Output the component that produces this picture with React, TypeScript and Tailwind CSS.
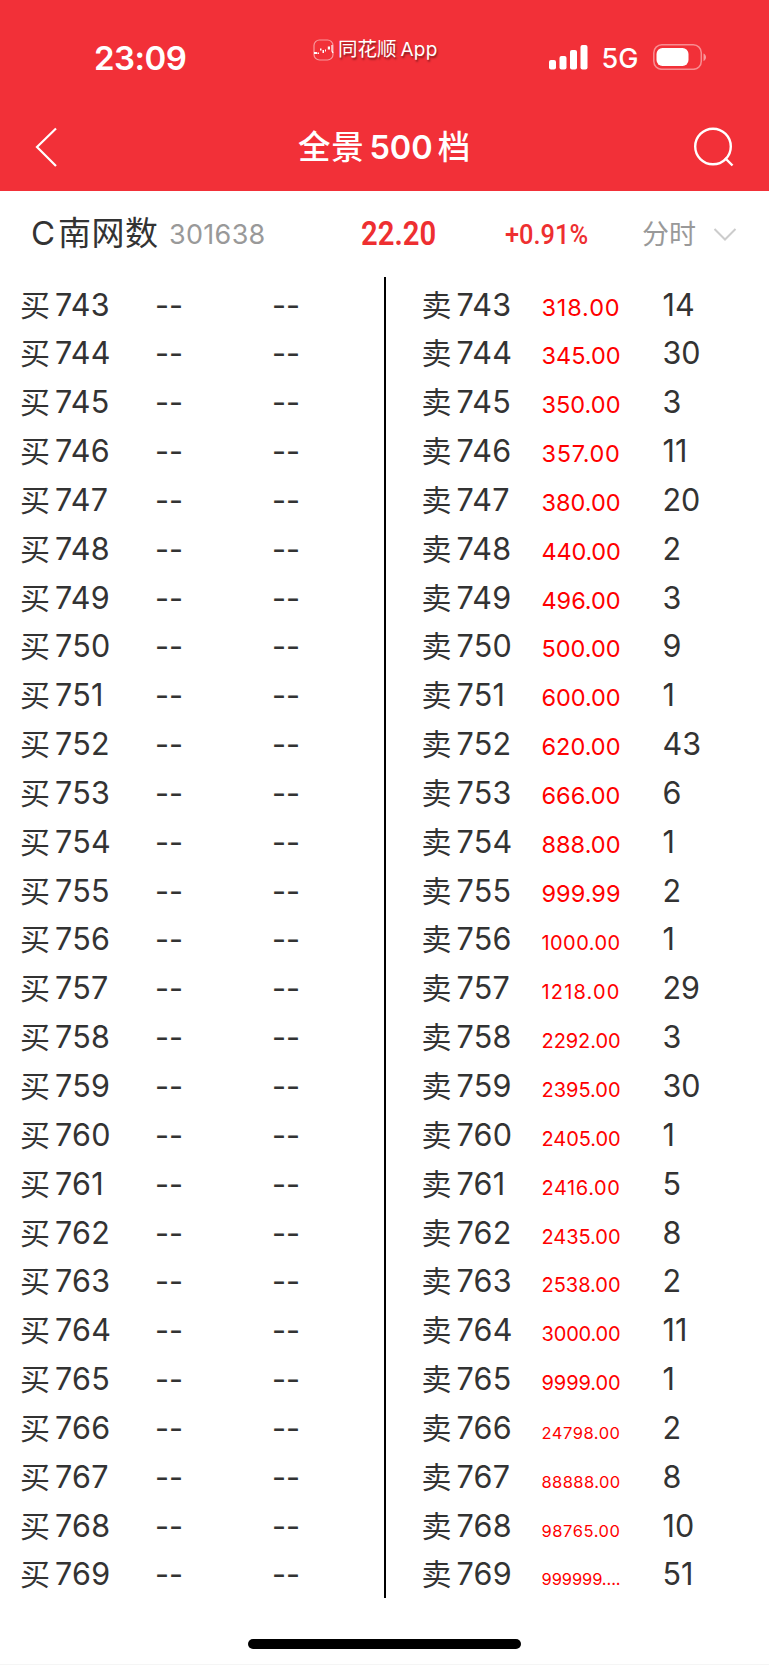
import { useLayoutEffect, useRef, useState } from 'react';

interface Level {
    level: number;
    price: string;
    volume: number;
}

const asks: Level[] = [
    { level: 743, price: '318.00', volume: 14 },
    { level: 744, price: '345.00', volume: 30 },
    { level: 745, price: '350.00', volume: 3 },
    { level: 746, price: '357.00', volume: 11 },
    { level: 747, price: '380.00', volume: 20 },
    { level: 748, price: '440.00', volume: 2 },
    { level: 749, price: '496.00', volume: 3 },
    { level: 750, price: '500.00', volume: 9 },
    { level: 751, price: '600.00', volume: 1 },
    { level: 752, price: '620.00', volume: 43 },
    { level: 753, price: '666.00', volume: 6 },
    { level: 754, price: '888.00', volume: 1 },
    { level: 755, price: '999.99', volume: 2 },
    { level: 756, price: '1000.00', volume: 1 },
    { level: 757, price: '1218.00', volume: 29 },
    { level: 758, price: '2292.00', volume: 3 },
    { level: 759, price: '2395.00', volume: 30 },
    { level: 760, price: '2405.00', volume: 1 },
    { level: 761, price: '2416.00', volume: 5 },
    { level: 762, price: '2435.00', volume: 8 },
    { level: 763, price: '2538.00', volume: 2 },
    { level: 764, price: '3000.00', volume: 11 },
    { level: 765, price: '9999.00', volume: 1 },
    { level: 766, price: '24798.00', volume: 2 },
    { level: 767, price: '88888.00', volume: 8 },
    { level: 768, price: '98765.00', volume: 10 },
    { level: 769, price: '999999....', volume: 51 },
];

const PRICE_WIDTH = 79;

function priceSize(price: string) {
    if (price.length <= 6) return 'text-[23.500px]';
    if (price.length === 7) return 'text-[20px]';
    return 'text-[16.500px]';
}

// Prices get smaller with length, tracking is tuned so they all fill the column
function Price({ value }: { value: string }) {
    const ref = useRef<HTMLSpanElement>(null);
    const [spacing, setSpacing] = useState(0);

    useLayoutEffect(() => {
        if (ref.current) {
            const { width } = ref.current.getBoundingClientRect();
            setSpacing((PRICE_WIDTH - width) / value.length);
        }
    }, [value]);

    return (
        <div className="w-[121px] text-[#ff0000]">
            <span ref={ref} className={priceSize(value)} style={{ letterSpacing: spacing }}>
                {value}
            </span>
        </div>
    );
}

function Label({ side, level }: { side: string; level: number }) {
    return (
        <div className="flex items-baseline">
            <span className="w-[35px] text-[30px]">{side}</span>
            <span className="tracking-[0.300px]">{level}</span>
        </div>
    );
}

function StatusBar() {
    return (
        <div className="flex h-[104px] items-start text-white">
            <div className="ml-[94px] mt-[38px] w-[219px] text-[33px] font-semibold leading-[40px] tracking-[-0.500px]">23:09</div>
            <div className="mt-[37px] flex items-center">
                <svg width="21" height="22" viewBox="0 0 21 22" fill="none">
                    <rect x="1" y="1" width="19" height="20" rx="5.5" stroke="white" strokeOpacity="0.5" strokeWidth="1.2" />
                    <path d="M1 13h3v2H1zM4.500 13.500h1.500v1.500H4.500zM7 9.500h1.500v2H7zM9.500 11h1.500v3H9.500zM12 10.500h1v2h-1zM14.800 7.500h2.200v3h-2.200z" fill="white" />
                    <path d="M19 6v6l1 2" stroke="white" strokeWidth="1.2" />
                </svg>
                <div className="ml-[4px] whitespace-nowrap text-[19.500px] leading-[24px] [text-shadow:1px_2px_2px_rgba(0,0,0,0.45)]">
                    同花顺<span className="ml-[4px] text-[19px] tracking-[0.200px]">App</span>
                </div>
            </div>
            <svg className="ml-auto mt-[45px]" width="39" height="25" fill="white">
                <rect x="0" y="15" width="7" height="9.500" rx="2" />
                <rect x="10.500" y="11" width="7" height="13.500" rx="2" />
                <rect x="21" y="5" width="7" height="19.500" rx="2" />
                <rect x="31.500" y="0" width="7" height="24.500" rx="2" />
            </svg>
            <div className="ml-[14px] mt-[42px] w-[51.500px] text-[27px] font-medium leading-[34px]">5G</div>
            <svg className="mr-[62px] mt-[44px]" width="54" height="26" fill="none">
                <rect x="0.800" y="0.800" width="47.500" height="24.500" rx="8" stroke="white" strokeOpacity="0.45" strokeWidth="1.500" />
                <rect x="3.500" y="4" width="32" height="18" rx="6" fill="white" />
                <path d="M50.500 9.500c1.500.500 2.500 2 2.500 3.700s-1 3.200-2.500 3.700z" fill="white" fillOpacity="0.5" />
            </svg>
        </div>
    );
}

function NavBar() {
    return (
        <div className="flex h-[87px] items-start px-[34px] text-white">
            <svg className="mt-[23px]" width="60" height="40" fill="none" stroke="white" strokeWidth="2.200">
                <path d="M22 1.500L3 20L22 39" />
            </svg>
            <h1 className="ml-[204px] mt-[22px] flex items-baseline text-[32.500px] font-semibold leading-[44px]">
                <span className="font-medium tracking-[0.700px]">全景</span>
                <span className="mx-[5px]">500</span>
                <span className="font-medium">档</span>
            </h1>
            <svg className="ml-auto mt-[23px] -mr-px" width="42" height="42" fill="none" stroke="white" strokeWidth="2.400">
                <circle cx="19" cy="19.500" r="17.800" />
                <path d="M31 31L38.500 38.500" />
            </svg>
        </div>
    );
}

function QuoteHeader() {
    return (
        <div className="flex h-[86px] items-baseline leading-[84.500px] text-[#999999]">
            <div className="ml-[31px] w-[138px] whitespace-nowrap text-[33px] text-[#333333]">
                C<span className="ml-[3px] tracking-[0.500px]">南网数</span>
            </div>
            <div className="w-[192px] -translate-y-px text-[27px] tracking-[0.300px]">301638</div>
            <div className="w-[144px] origin-left scale-x-[0.86] font-['Roboto'] text-[34px] font-semibold text-[#ee2f31]">22.20</div>
            <div className="w-[137px] origin-left -translate-y-px scale-x-[0.94] font-['Roboto'] text-[27px] font-medium text-[#ee2f31]">+0.91%</div>
            <div className="-translate-y-px text-[27px]">分时</div>
            <svg className="ml-[17px] -translate-y-[3px]" width="24" height="14" fill="none" stroke="#cccccc" strokeWidth="2">
                <path d="M1.500 1L12 11.500L22.500 1" />
            </svg>
        </div>
    );
}

export default function App() {
    return (
        <div className="flex h-[1665px] w-[769px] flex-col overflow-hidden border-b border-[#f5f5f5] bg-white font-['Inter','Noto_Sans_CJK_SC',sans-serif] text-[#333333]">
            <header className="bg-[#f23038]">
                <StatusBar />
                <NavBar />
            </header>

            <QuoteHeader />

            <main className="flex h-[1321px] text-[30.500px] leading-[48.850px]">
                <div className="w-[383.500px] pl-[20px] pt-[3.500px]">
                    {asks.map(({ level }) => (
                        <div key={level} className="flex h-[48.850px] items-baseline">
                            <div className="w-[135px]">
                                <Label side="买" level={level} />
                            </div>
                            <span className="w-[117px]">--</span>
                            <span>--</span>
                        </div>
                    ))}
                </div>
                <div className="w-[2px] bg-black" />
                <div className="flex-1 pl-[36px] pt-[3.500px]">
                    {asks.map(({ level, price, volume }) => (
                        <div key={level} className="flex h-[48.850px] items-baseline">
                            <div className="w-[120px]">
                                <Label side="卖" level={level} />
                            </div>
                            <Price value={price} />
                            <span>{volume}</span>
                        </div>
                    ))}
                </div>
            </main>

            {/* Home indicator */}
            <div className="ml-[247.500px] mt-[41px] h-[10px] w-[273.500px] rounded-full bg-black" />
        </div>
    );
}
